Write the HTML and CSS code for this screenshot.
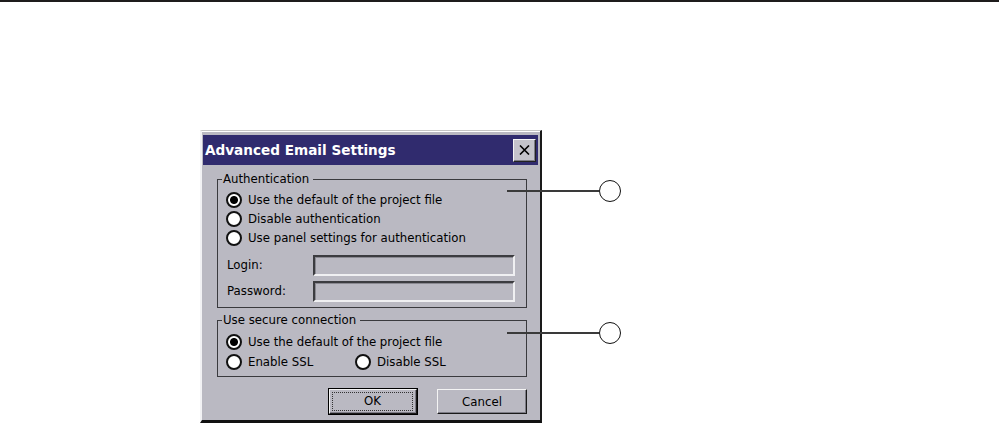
FILE: index.html
```html
<!DOCTYPE html>
<html lang="en">
<head>
    <meta charset="UTF-8">
    <meta name="viewport" content="width=device-width, initial-scale=1.0">
    <title>Advanced Email Settings</title>
    <link rel="stylesheet" href="styles.css">
</head>
<body>
    <div class="rule"></div>

    <div class="stage">
        <div class="dialog">
            <div class="titlebar">
                <span class="title">Advanced Email Settings</span>
                <button class="close" aria-label="Close">
                    <svg width="11" height="10" viewBox="0 0 11 10">
                        <path d="M1 0.5 L10 9.5 M10 0.5 L1 9.5" stroke="#000" stroke-width="1.6" fill="none"/>
                    </svg>
                </button>
            </div>

            <div class="content">
                <fieldset class="group auth">
                    <legend>Authentication</legend>
                    <label class="option"><span class="radio checked"></span>Use the default of the project file</label>
                    <label class="option"><span class="radio"></span>Disable authentication</label>
                    <label class="option"><span class="radio"></span>Use panel settings for authentication</label>

                    <div class="fields">
                        <div class="field">
                            <span class="field-label">Login:</span>
                            <span class="field-box"></span>
                        </div>
                        <div class="field">
                            <span class="field-label">Password:</span>
                            <span class="field-box"></span>
                        </div>
                    </div>
                </fieldset>

                <fieldset class="group secure">
                    <legend>Use secure connection</legend>
                    <label class="option"><span class="radio checked"></span>Use the default of the project file</label>
                    <div class="option-row">
                        <label class="option first"><span class="radio"></span>Enable SSL</label>
                        <label class="option"><span class="radio"></span>Disable SSL</label>
                    </div>
                </fieldset>

                <div class="buttons">
                    <button class="btn default"><span class="focus">OK</span></button>
                    <button class="btn">Cancel</button>
                </div>
            </div>
        </div>

        <!-- callout markers -->
        <div class="callout c1"><span class="line"></span><span class="circle"></span></div>
        <div class="callout c2"><span class="line"></span><span class="circle"></span></div>
    </div>
</body>
</html>
```

FILE: styles.css
```css
body {
    margin: 0;
    padding: 0;
    background-color: #fff;
    font-family: "DejaVu Sans", Verdana, sans-serif;
    font-size: 11.75px;
    color: #000;
    overflow: hidden;
}
.rule {
    height: 2px;
    background-color: #1e1c1c;
}
.stage {
    position: relative;
    padding-left: 200px;
    padding-top: 128px;
}
.dialog {
    box-sizing: border-box;
    width: 342px;
    height: 293px;
    background-color: #bab9c2;
    border-top: 1px solid #c6c6c6;
    border-left: 2px solid #f2f2f4;
    border-right: 2px solid #1a1a1a;
    border-bottom: 3px solid #111;
    box-shadow: inset 0 1px 0 #fff;
    padding: 4px 2px 0 1px;
}
.titlebar {
    height: 30px;
    background-color: #302b6e;
    display: flex;
    align-items: center;
    justify-content: space-between;
    padding-left: 2px;
    padding-right: 2px;
}
.title {
    color: #fff;
    font-weight: bold;
    font-size: 13.6px;
}
.close {
    width: 23px;
    height: 23px;
    padding: 0;
    background-color: #c4c3cb;
    border: 1px solid;
    border-color: #f4f4f4 #222 #222 #f4f4f4;
    box-shadow: inset -1px -1px 0 #7d7c86;
    display: flex;
    align-items: center;
    justify-content: center;
}
.content {
    padding: 7px 11px 0 14px;
}
.group {
    margin: 0;
    border: 1px solid #3a3a3e;
    padding: 4px 10px 5px 8px;
}
.group legend {
    margin-left: -4px;
    padding: 0 4px 0 1px;
    line-height: 14px;
}
.secure {
    margin-top: 5px;
    padding-top: 5px;
    padding-bottom: 4px;
}
.option {
    display: flex;
    align-items: center;
    height: 19px;
    gap: 6px;
}
.secure .option {
    height: 20px;
}
.option-row {
    display: flex;
}
.option-row .first {
    width: 129px;
}
.radio {
    box-sizing: border-box;
    width: 16px;
    height: 16px;
    border-radius: 50%;
    border: 2px solid #111;
    background-color: #fff;
    flex: none;
}
.radio.checked {
    background: radial-gradient(circle, #000 3.5px, #fff 4.5px);
}
.fields {
    margin-top: 8px;
    display: flex;
    flex-direction: column;
    gap: 5px;
}
.field {
    display: flex;
    align-items: center;
}
.field-label {
    width: 87px;
    padding-left: 1px;
    padding-bottom: 2px;
    box-sizing: border-box;
}
.field-box {
    box-sizing: border-box;
    width: 202px;
    height: 21px;
    border: 2px solid;
    border-color: #3c3c40 #f0f0f2 #f0f0f2 #3c3c40;
    box-shadow: inset 1px 1px 0 #8a8991;
}
.buttons {
    display: flex;
    justify-content: flex-end;
    align-items: center;
    gap: 20px;
    margin-top: 11px;
    height: 27px;
}
.btn {
    box-sizing: border-box;
    width: 90px;
    height: 25px;
    padding: 0;
    font-family: "DejaVu Sans", Verdana, sans-serif;
    font-size: 11.75px;
    color: #000;
    background-color: #bab9c2;
    border: 1px solid;
    border-color: #f4f4f4 #1a1a1a #1a1a1a #f4f4f4;
    box-shadow: inset -1px -1px 0 #7d7c86;
}
.btn.default {
    width: 88px;
    outline: 1px solid #000;
}
.focus {
    display: block;
    margin: 2px 3px 2px 2px;
    height: 17px;
    line-height: 17px;
    border: 1px dotted #333;
}
.callout {
    position: absolute;
    left: 507px;
    display: flex;
    align-items: center;
    height: 22px;
}
.callout.c1 {
    top: 178px;
}
.callout.c2 {
    top: 320px;
}
.callout .line {
    width: 92px;
    height: 2px;
    background-color: #3a3a3a;
}
.callout .circle {
    box-sizing: border-box;
    width: 22px;
    height: 22px;
    border-radius: 50%;
    border: 1.5px solid #111;
    background-color: #fff;
}
```
